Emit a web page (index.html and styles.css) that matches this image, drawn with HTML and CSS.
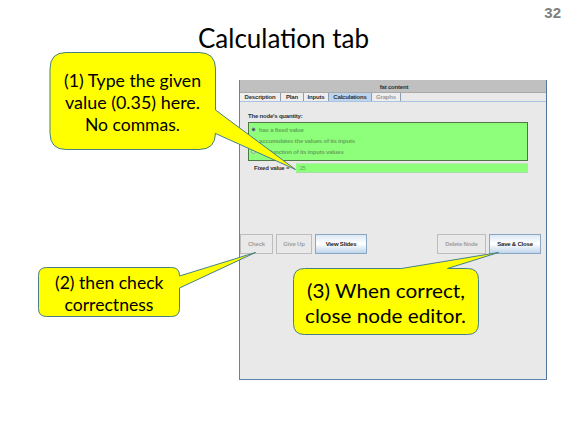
FILE: index.html
```html
<!DOCTYPE html>
<html lang="en">
<head>
<meta charset="utf-8">
<title>Calculation tab</title>
<link rel="stylesheet" href="styles.css">
</head>
<body>
<main class="slide">
  <header class="head">
    <div class="page">32</div>
    <svg class="title" width="567" height="36" viewBox="0 22 567 36">
      <text x="198" y="48" textLength="171" lengthAdjust="spacingAndGlyphs">Calculation tab</text>
    </svg>
  </header>
  <section class="editor">
    <div class="bar">fat content</div>
    <nav class="tabs">
      <span class="tab t1">Description</span><span class="tab t2">Plan</span><span class="tab t3">Inputs</span><span class="tab t4 active">Calculations</span><span class="tab t5 off">Graphs</span>
    </nav>
    <div class="pane">
      <div class="label">The node's quantity:</div>
      <div class="options">
        <div class="option"><i class="radio on"></i><span class="o1">has a fixed value</span></div>
        <div class="option"><i class="radio"></i><span class="o2">accumulates the values of its inputs</span></div>
        <div class="option"><i class="radio"></i><span class="o3">is a function of its inputs values</span></div>
      </div>
      <div class="field"><span class="name">Fixed value =</span><span class="input">.35</span></div>
      <div class="buttons">
        <span class="btn b1 off">Check</span><span class="btn b2 off">Give Up</span><span class="btn b3">View Slides</span>
        <span class="btn b4 off">Delete Node</span><span class="btn b5">Save &amp; Close</span>
      </div>
    </div>
  </section>
  <svg class="callouts" width="567" height="425" viewBox="0 0 567 425">
    <path d="M66 52.500H199Q215.500 52.500 215.500 69V110L295.500 169.500L215.500 133.500V133Q215.500 149.500 199 149.500H66Q50 149.500 50 133V69Q50 52.500 66 52.500Z"/>
    <path d="M46.500 267.500H171.500Q179.500 267.500 179.500 275.500V276L255.500 252.500L179.500 288V308.500Q179.500 316.500 171.500 316.500H46.500Q38.500 316.500 38.500 308.500V275.500Q38.500 267.500 46.500 267.500Z"/>
    <path d="M304.500 268.500H401.500L498.500 252.500L447.500 268.500H467.500Q478.500 268.500 478.500 279.500V323.500Q478.500 334.500 467.500 334.500H304.500Q293.500 334.500 293.500 323.500V279.500Q293.500 268.500 304.500 268.500Z"/>
    <g class="small">
      <text x="64" y="87" textLength="137" lengthAdjust="spacingAndGlyphs">(1) Type the given</text>
      <text x="65" y="109" textLength="135" lengthAdjust="spacingAndGlyphs">value (0.35) here.</text>
      <text x="85" y="131" textLength="95" lengthAdjust="spacingAndGlyphs">No commas.</text>
      <text x="55" y="289" textLength="108.500" lengthAdjust="spacingAndGlyphs">(2) then check</text>
      <text x="64.500" y="311" textLength="89" lengthAdjust="spacingAndGlyphs">correctness</text>
    </g>
    <g class="large">
      <text x="307" y="298" textLength="158" lengthAdjust="spacingAndGlyphs">(3) When correct,</text>
      <text x="305" y="323" textLength="161" lengthAdjust="spacingAndGlyphs">close node editor.</text>
    </g>
  </svg>
</main>
</body>
</html>
```

FILE: styles.css
```css
* { box-sizing: border-box; }
body { margin: 0; background: #fff; }
.slide { position: relative; width: 567px; height: 425px; overflow: hidden; }
.head { height: 80px; font-family: "Liberation Sans", sans-serif; }
.page { height: 22px; padding: 4px 6px 0 0; text-align: right; font-size: 15px; line-height: 17px; font-weight: bold; color: #808080; }
.title { display: block; font-family: Lato, sans-serif; font-size: 26px; }
.editor { width: 308px; height: 300px; margin-left: 239px; border: 1px solid #5f82b0; border-top: 0; border-right-color: #54749b; background: #e9e9e9; font: bold 6px/8px "Liberation Sans", sans-serif; letter-spacing: -0.2px; color: #303030; display: flex; flex-direction: column; white-space: nowrap; }
.bar { height: 13px; background: #c0c0c0; border-bottom: 1px solid #aaa; text-align: center; line-height: 14px; padding-left: 2px; }
.tabs { display: flex; height: 8px; }
.tab { display: flex; justify-content: center; border-right: 1px solid #8d9cae; background: #eee; line-height: 8px; }
.t1 { width: 41px; }
.t2 { width: 23px; }
.t3 { width: 25px; }
.t4 { width: 43px; }
.t5 { width: 29px; }
.active { background: #bdd4ed; }
.tab.off { color: #999; }
.pane { flex: 1; border-top: 1px solid #a9c3e4; padding: 10px 4px 0 8px; }
.label { height: 10px; line-height: 8px; }
.options { width: 280px; height: 39px; border: 1px solid #4f7744; background: #8eff7a; padding: 1px 0 0 2px; color: #65a85a; }
.option { display: flex; align-items: center; height: 11px; gap: 3px; }
.radio { width: 5px; height: 5px; border: 1px solid #8baa93; border-radius: 50%; background: #c5eec4; }
.on { background: #426849; border-color: #b6cbd2; }
.field { display: flex; height: 10px; margin-top: 2px; line-height: 10px; padding-left: 6px; }
.name { width: 42px; }
.input { width: 232px; background: #8eff7a; color: #65a85a; padding-left: 2px; border-bottom: 1px solid #a9dda8; border-top: 1px solid #b6e7b0; line-height: 8px; font-weight: normal; }
.buttons { display: flex; gap: 3px; margin: 61px 1px 0 -8px; height: 20px; }
.btn { display: flex; align-items: center; justify-content: center; height: 20px; border: 1px solid #8ba6c1; background: linear-gradient(#dce8f5, #fff 48%, #bfd5ec); color: #222; }
.btn.off { background: #e9e9e9; border-color: #bdbdbd; color: #a0a0a0; }
.b1 { width: 33px; }
.b2 { width: 36px; }
.b3 { width: 52px; }
.b4 { width: 49px; margin-left: auto; }
.b5 { width: 52px; }
.callouts { position: absolute; left: 0; top: 0; font-family: Lato, sans-serif; }
.callouts path { fill: #ff0; stroke: #467f86; stroke-width: 1; }
.small { font-size: 17px; }
.large { font-size: 19.8px; }
```
